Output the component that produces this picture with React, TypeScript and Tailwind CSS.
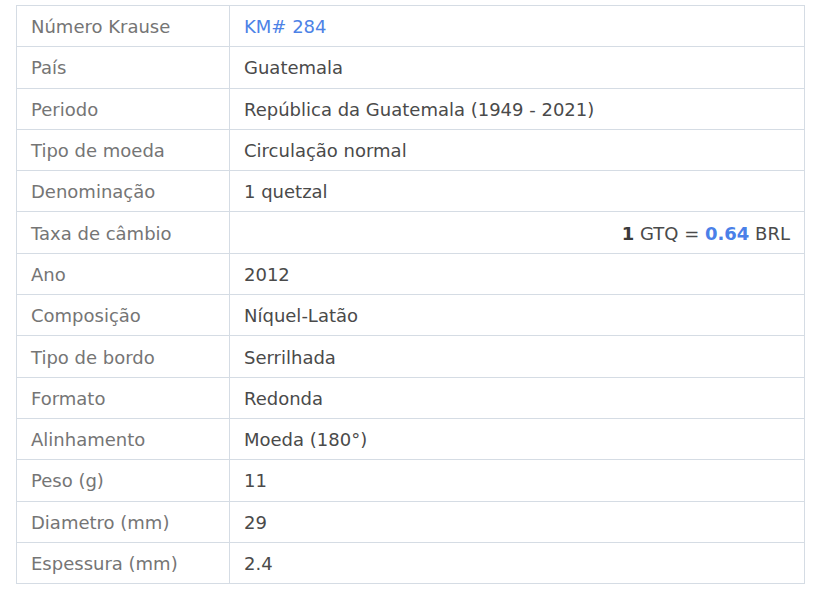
import React from 'react';

type Row = { label: string; value: React.ReactNode; align?: 'right' };

const ROWS: Row[] = [
  { label: 'Número Krause', value: <span className="text-[#4d82e6]">KM# 284</span> },
  { label: 'País', value: 'Guatemala' },
  { label: 'Periodo', value: 'República da Guatemala (1949 - 2021)' },
  { label: 'Tipo de moeda', value: 'Circulação normal' },
  { label: 'Denominação', value: '1 quetzal' },
  {
    label: 'Taxa de câmbio',
    value: (
      <>
        <b className="font-bold text-[#3a3a3a]">1</b> GTQ = <b className="font-bold text-[#4a80e8]">0.64</b> BRL
      </>
    ),
    align: 'right',
  },
  { label: 'Ano', value: '2012' },
  { label: 'Composição', value: 'Níquel-Latão' },
  { label: 'Tipo de bordo', value: 'Serrilhada' },
  { label: 'Formato', value: 'Redonda' },
  { label: 'Alinhamento', value: 'Moeda (180°)' },
  { label: 'Peso (g)', value: '11' },
  { label: 'Diametro (mm)', value: '29' },
  { label: 'Espessura (mm)', value: '2.4' },
];

const App: React.FC = () => {
  return (
    <div className="min-h-screen bg-white pt-[5px] px-4 font-[family-name:'DejaVu_Sans',Verdana,sans-serif] text-[18px]">
      <table className="w-[789px] border-collapse text-[18px]">
        <tbody>
          {ROWS.map((row) => (
            <tr key={row.label} className="h-[41.3px]">
              <td className="w-[213px] border border-[#d5dce4] px-[14px] pt-[2px] pb-0 text-[#757575] leading-none">
                {row.label}
              </td>
              <td
                className={`border border-[#d5dce4] px-[14px] pt-[2px] pb-0 text-[#4a4a4a] leading-none ${
                  row.align === 'right' ? 'text-right' : 'text-left'
                }`}
              >
                {row.value}
              </td>
            </tr>
          ))}
        </tbody>
      </table>
    </div>
  );
};

export default App;
